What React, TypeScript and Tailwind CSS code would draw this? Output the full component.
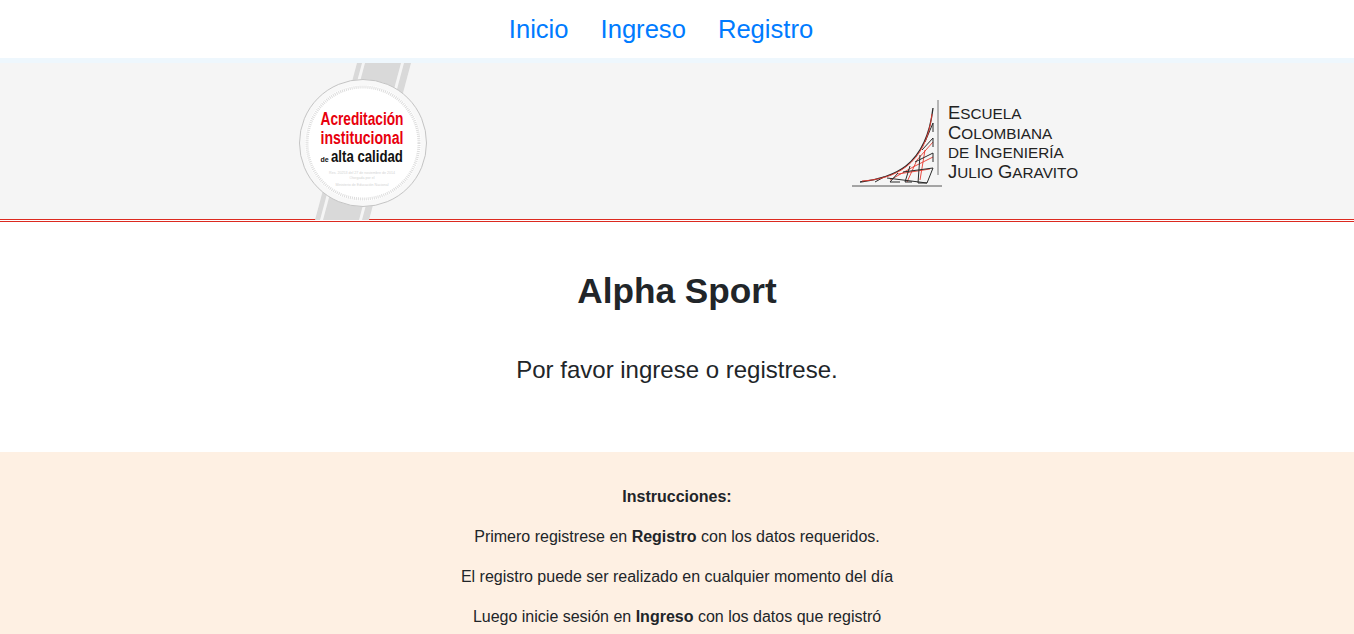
const sans = "'Liberation Sans', sans-serif";

const Seal = () => (
  <svg width="130" height="157" viewBox="0 0 130 157" className="block">
    <polygon points="58,0 112,0 70,157 16,157" fill="#d9d9d9" />
    <polygon points="63,0 66,0 24,157 21,157" fill="#f5f5f5" />
    <polygon points="102,0 105,0 63,157 60,157" fill="#f5f5f5" />
    <circle cx="64" cy="80" r="63.5" fill="#f8f8f8" stroke="#c4c4c4" strokeWidth="1" />
    <circle cx="64" cy="80" r="58" fill="#ffffff" />
    <circle cx="64" cy="80" r="56" fill="none" stroke="#dddddd" strokeWidth="3" strokeDasharray="1 1" />
    <text transform="translate(21.5 62) scale(0.741 1)" fill="#e8000d" fontFamily={sans} fontSize="18.5" fontWeight="700">Acreditación</text>
    <text transform="translate(21.5 81) scale(0.762 1)" fill="#e8000d" fontFamily={sans} fontSize="18.5" fontWeight="700">institucional</text>
    <text x="21.5" y="99" fill="#111111" fontFamily={sans} fontSize="7" fontWeight="700">de</text>
    <text transform="translate(32 99) scale(0.777 1)" fill="#111111" fontFamily={sans} fontSize="17" fontWeight="700">alta calidad</text>
    <text x="63" y="111" textAnchor="middle" fill="#d4d4d4" fontFamily={sans} fontSize="3.6">Res. 20253 del 27 de noviembre de 2014</text>
    <text x="63" y="116" textAnchor="middle" fill="#d4d4d4" fontFamily={sans} fontSize="3.6">Otorgada por el</text>
    <text x="63" y="123" textAnchor="middle" fill="#d4d4d4" fontFamily={sans} fontSize="3.6">Ministerio de Educación Nacional</text>
  </svg>
);

const EciMark = () => (
  <svg width="90" height="87" viewBox="0 0 90 87" className="block shrink-0">
    <line x1="86" y1="0" x2="86" y2="75" stroke="#777777" strokeWidth="1" />
    <line x1="0" y1="86" x2="90" y2="86" stroke="#555555" strokeWidth="1" />
    <g fill="none" stroke="#e8392f" strokeWidth="0.9">
      <path d="M38 80 L61 67 L81 57" />
      <path d="M55 82 L65 60 L81 42" />
      <path d="M68 80 L73 50" />
      <path d="M46 74 L78 69" />
    </g>
    <g fill="none" stroke="#2b2b2b" strokeWidth="1">
      <path d="M8 82 C40 78 74 68 81 8" strokeWidth="1.3" />
      <path d="M81 23 L73 42 M81 38 L70 50 M81 53 L63 62 M81 68 L51 72 M75 83 L35 78" />
      <path d="M23 82 L32 77 M38 82 L46 73 M53 82 L58 66 M66 83 L68 55 M75 83 L81 68" />
      <path d="M81 23 L81 32 M81 38 L81 47 M81 53 L81 62" />
      <path d="M38 82 L48 82 M53 82 L60 82 M66 83 L75 83" />
    </g>
    <path d="M10 81 C42 79 74 66 80 14" fill="none" stroke="#e8392f" strokeWidth="0.9" />
  </svg>
);

const App = () => {
  return (
    <div className="min-h-screen bg-white font-['Liberation_Sans',sans-serif] text-[#212529]">
      <nav className="flex h-[58px] items-center justify-center gap-8 pr-8 text-[25.6px] text-[#007bff]">
        <a href="#">Inicio</a>
        <a href="#">Ingreso</a>
        <a href="#">Registro</a>
      </nav>

      <div className="h-[5px] bg-[#eef7fd]" />

      <header className="flex h-[156px] items-start justify-center bg-[#f5f5f5]">
        <div className="flex w-[1128px]">
          <div className="w-1/2 pl-[186px]">
            <Seal />
          </div>
          <div className="flex w-1/2 items-start gap-[6px] pl-[175px] pt-[37px]">
            <EciMark />
            <div className="mt-[3px] whitespace-nowrap text-[18.4px] leading-[19.6px] text-[#222222]">
              <p className="h-[19.6px]">E<span className="text-[15.3px]">SCUELA</span></p>
              <p className="h-[19.6px]">C<span className="text-[15.3px]">OLOMBIANA</span></p>
              <p className="h-[19.6px]"><span className="text-[15.3px]">DE</span> I<span className="text-[15.3px]">NGENIERÍA</span></p>
              <p className="h-[19.6px]">J<span className="text-[15.3px]">ULIO</span> G<span className="text-[15.3px]">ARAVITO</span></p>
            </div>
          </div>
        </div>
      </header>

      <div className="h-[3px] border-y border-[#dc2a20] bg-white" />

      <main className="flex h-[230px] flex-col items-center bg-white">
        <h1 className="mt-[47px] text-[35.2px] font-bold leading-[43px]">Alpha Sport</h1>
        <p className="mt-[40px] text-[24px] leading-[36px]">Por favor ingrese o registrese.</p>
      </main>

      <section className="flex h-[182px] flex-col items-center gap-4 overflow-hidden bg-[#fef0e3] pt-[33px] text-base leading-[24px]">
        <p className="font-bold">Instrucciones:</p>
        <p>Primero registrese en <b>Registro</b> con los datos requeridos.</p>
        <p>El registro puede ser realizado en cualquier momento del día</p>
        <p>Luego inicie sesión en <b>Ingreso</b> con los datos que registró</p>
      </section>
    </div>
  );
};

export default App;
